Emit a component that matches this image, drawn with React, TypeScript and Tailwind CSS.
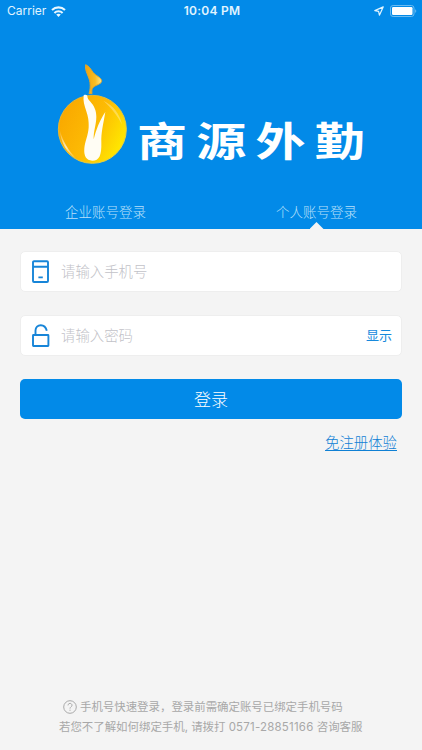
import React from 'react';

function WifiIcon() {
  return (
    <svg width="15" height="11" viewBox="0 0 15 11" className="ml-[5px]" fill="none" stroke="#e8f7ff" strokeWidth="2.1">
      <path d="M1 4.1C4.7.5 10.3.5 14 4.1" />
      <path d="M3.4 6.9c2.3-2.2 5.9-2.2 8.2 0" />
      <path d="M7.5 10.9 5.2 8.6c1.3-1.2 3.3-1.2 4.6 0z" fill="#e8f7ff" stroke="none" />
    </svg>
  );
}

function StatusBar() {
  return (
    <div className="grid h-[22px] grid-cols-[1fr_auto_1fr] items-center pl-[7px] pr-[5px] text-[#e0f4ff]">
      <div className="flex items-center">
        <span className="text-[12px] font-normal leading-none">Carrier</span>
        <WifiIcon />
      </div>
      <span className="text-[12px] font-semibold leading-none tracking-[0.25px]">10:04 PM</span>
      <div className="flex items-center justify-end gap-[6px]">
        <svg width="10" height="10" viewBox="0 0 10 10" fill="none" stroke="#e0f4ff" strokeWidth="1.2" strokeLinejoin="round">
          <path d="M9.2.9.8 4.6l3.8.8.8 3.8z" />
        </svg>
        <svg width="27" height="12" viewBox="0 0 27 12">
          <rect x=".5" y=".5" width="23.5" height="11" rx="2.6" fill="none" stroke="#6cbcf2" />
          <rect x="2" y="2" width="20.5" height="8" rx="1.2" fill="#fff" />
          <path d="M25.2 4.2c1.4.5 1.4 3.1 0 3.6z" fill="#6cbcf2" />
        </svg>
      </div>
    </div>
  );
}

function Emblem() {
  return (
    <svg width="85" height="112" viewBox="0 0 255 336" className="shrink-0">
      <defs>
        <linearGradient id="ball" x1="0" y1=".3" x2="1" y2=".8">
          <stop offset="0" stopColor="#f9a800" />
          <stop offset=".5" stopColor="#fdbb04" />
          <stop offset="1" stopColor="#fff000" />
        </linearGradient>
        <linearGradient id="rim" x1="0" y1="0" x2="1" y2="1">
          <stop offset="0" stopColor="#e6ad2c" />
          <stop offset="1" stopColor="#e8d648" />
        </linearGradient>
        <linearGradient id="leaf" x1="0" y1="0" x2="1" y2="0">
          <stop offset="0" stopColor="#f2a20a" />
          <stop offset=".6" stopColor="#f9bd22" />
          <stop offset="1" stopColor="#ffe88e" />
        </linearGradient>
        <linearGradient id="shine" x1="0" y1="0" x2="0" y2="1">
          <stop offset="0" stopColor="#fff" stopOpacity=".05" />
          <stop offset=".6" stopColor="#fff" stopOpacity=".7" />
          <stop offset="1" stopColor="#fff" stopOpacity=".1" />
        </linearGradient>
      </defs>
      <circle cx="127" cy="214" r="102" fill="url(#ball)" stroke="url(#rim)" strokeWidth="3" />
      <path d="M29 215c3 38 22 70 50 87-22-23-40-50-50-87z" fill="url(#shine)" />
      <path d="M160 128c30 14 50 40 56 72-14-28-32-50-56-72z" fill="#fff" opacity=".3" />
      <path d="M107 20c11 5 15 13 22 23 8 10 24 15 26 25 1 9-14 12-21 17-9 6-9 10-8 22h-9c4-12 4-22 3-33-2-18-17-36-13-54z" fill="url(#leaf)" stroke="#e0a52c" strokeWidth="3" />
      <path d="M101 112c4-2 8-2 11 1 0 7 3 11 8 17 12 13 19 27 19 46 0 24-9 43-8 68 8-30 17-55 35-82-6 36-13 62-12 92 1 37-6 54-27 54-19 0-26-15-24-37 2-21 12-40 13-63 1-20-2-32-7-48-6-18-10-30-8-48z" fill="#fffdf4" />
    </svg>
  );
}

function Header() {
  return (
    <header className="flex h-[229px] flex-col bg-[#028ae8]">
      <StatusBar />
      <div className="flex pl-[50px] pt-9">
        <Emblem />
        <h1 className="ml-[2px] mt-[56px] h-[56px] origin-left scale-x-[1.25] whitespace-nowrap text-[40px] font-bold leading-[56px] tracking-[7.4px] text-white">
          商源外勤
        </h1>
      </div>
      <nav className="mt-auto grid h-[34px] grid-cols-2 text-center text-[13.5px] leading-[34px] text-[#b9e0fa]">
        <span>企业账号登录</span>
        <span className="relative">
          个人账号登录
          <i className="absolute bottom-0 left-1/2 h-[7px] w-[14px] -translate-x-1/2 bg-[#f4f4f4] [clip-path:polygon(50%_0,100%_100%,0_100%)]" />
        </span>
      </nav>
    </header>
  );
}

function PhoneIcon() {
  return (
    <svg width="18" height="24" viewBox="0 0 18 24" fill="none" stroke="#1785d8" strokeWidth="1.9">
      <rect x="1" y="1.2" width="15" height="20.8" rx="1" />
      <path d="M1 6.8h15M6.4 17.4h4.4" />
    </svg>
  );
}

function LockIcon() {
  return (
    <svg width="18" height="24" viewBox="0 0 18 24" fill="none" stroke="#1785d8" strokeWidth="1.9">
      <rect x="1" y="11" width="15.4" height="11" rx=".4" />
      <path d="M3.5 11V6.6C3.5 3.3 5.8 1.2 8.8 1.2c2.9 0 5 1.6 6 5.5" />
    </svg>
  );
}

function Field({ icon, hint, action }: { icon: React.ReactNode; hint: string; action?: string }) {
  return (
    <div className="flex h-[41px] items-center rounded-[5px] border border-[#eeeeee] bg-white pl-[11px] pr-[9px]">
      {icon}
      <span className="ml-[11px] pt-px text-[14.4px] leading-none text-[#c2c2c8]">{hint}</span>
      {action && <button className="ml-auto text-[13px] font-normal leading-none text-[#1789dc]">{action}</button>}
    </div>
  );
}

export default function App() {
  return (
    <div className="flex h-[750px] w-[422px] flex-col overflow-hidden bg-[#f4f4f4] font-['Inter','Noto_Sans_CJK_SC',sans-serif] font-light">
      <Header />
      <main className="flex flex-col px-5 pt-[22px]">
        <Field icon={<PhoneIcon />} hint="请输入手机号" />
        <div className="mt-[23px]">
          <Field icon={<LockIcon />} hint="请输入密码" action="显示" />
        </div>
        <button className="mt-[23px] h-10 rounded-[5px] bg-[#028ae8] pt-[2px] text-[17px] leading-[38px] text-white">登录</button>
        <a className="mr-[5px] mt-[13px] self-end text-[14.4px] leading-[22px] text-[#0f80d4] underline underline-offset-[2px]">免注册体验</a>
      </main>
      <footer className="mt-auto pb-[13px] text-[#a8a8a8]">
        <div className="flex h-5 items-center pl-[63px] text-[11.43px]">
          <svg width="14" height="14" viewBox="0 0 14 14" fill="none" stroke="#a0a0a0" strokeWidth=".9" className="mr-[3px]">
            <circle cx="7" cy="7" r="6.3" />
            <path d="M5 5.4c0-2.7 4-2.6 4-.1C9 6.8 7 6.8 7 8.6M7 9.7v1.1" />
          </svg>
          <span className="whitespace-nowrap pt-[2px] font-normal">手机号快速登录，登录前需确定账号已绑定手机号码</span>
        </div>
        <p className="h-5 whitespace-nowrap pl-[59px] text-[11.43px] font-normal leading-5">
          若您不了解如何绑定手机, 请拨打 <span className="tracking-[0.25px]">0571-28851166</span> 咨询客服
        </p>
      </footer>
    </div>
  );
}
